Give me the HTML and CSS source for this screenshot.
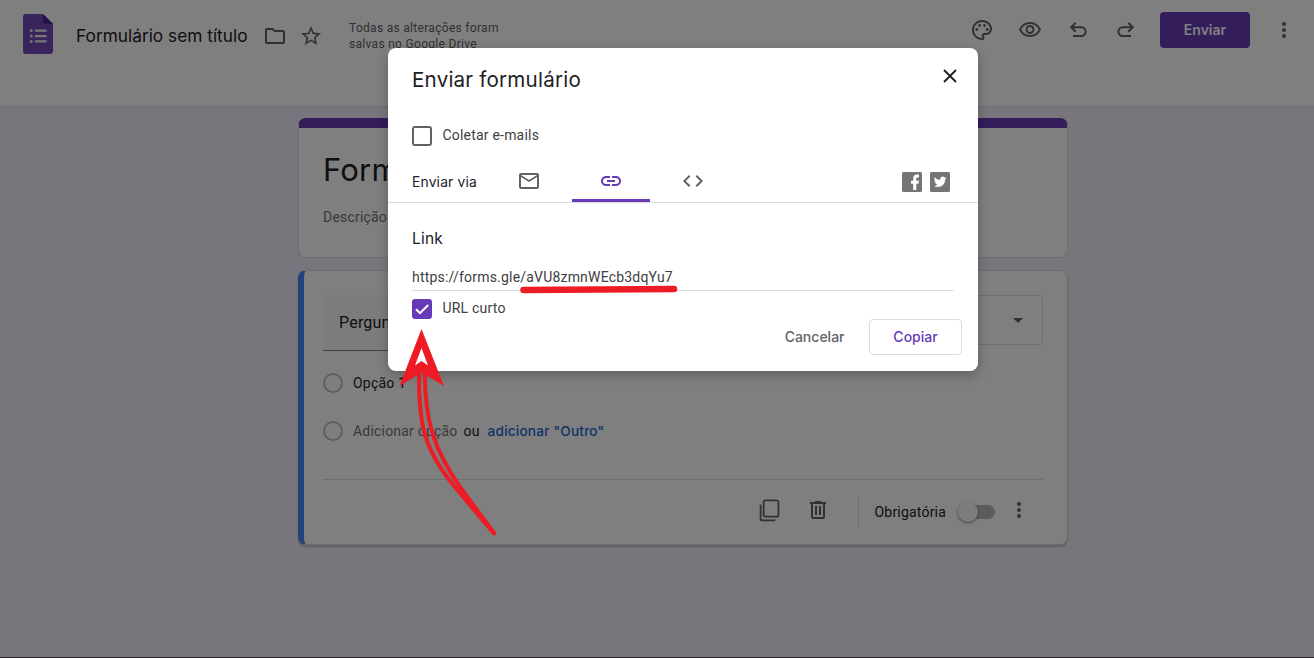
FILE: index.html
```html
<!DOCTYPE html>
<html lang="pt-BR">
<head>
<meta charset="utf-8">
<title>Formulário sem título</title>
<link rel="stylesheet" href="styles.css">
</head>
<body>
<div class="app">
  <header class="topbar">
    <div class="topbar-left">
      <svg class="logo" viewBox="0 0 30 40"><path fill="#7248b9" d="M3 0h17l10 10v27a3 3 0 0 1-3 3H3a3 3 0 0 1-3-3V3a3 3 0 0 1 3-3z"/><path fill="#4a2490" d="M20 0l10 10h-7.500a2.500 2.500 0 0 1-2.500-2.500z"/><path fill="#f1f1f1" d="M12 15.500h11.500v2.300H12zM12 20.900h11.500v2.300H12zM12 26.300h11.500v2.300H12z"/><g fill="#f1f1f1"><circle cx="8.300" cy="16.600" r="1.500"/><circle cx="8.300" cy="22" r="1.500"/><circle cx="8.300" cy="27.400" r="1.500"/></g></svg>
      <span class="doc-title">Formulário sem título</span>
      <svg class="icon folder" viewBox="0 0 24 24"><path d="M9.170 6l2 2H20v10H4V6h5.170M10 4H4c-1.100 0-1.990.9-1.990 2L2 18c0 1.100.9 2 2 2h16c1.100 0 2-.9 2-2V8c0-1.100-.9-2-2-2h-8l-2-2z"/></svg>
      <svg class="icon star" viewBox="0 0 24 24"><path d="M22 9.240l-7.190-.62L12 2 9.190 8.630 2 9.240l5.460 4.730L5.820 21 12 17.270 18.180 21l-1.630-7.030L22 9.240zM12 15.400l-3.760 2.270 1-4.280-3.320-2.880 4.380-.38L12 6.100l1.710 4.040 4.380.38-3.320 2.880 1 4.280L12 15.400z"/></svg>
      <p class="save-status">Todas as alterações foram<br>salvas no Google Drive</p>
    </div>
    <div class="topbar-right">
      <svg class="icon" viewBox="0 0 24 24"><path d="M12 22C6.490 22 2 17.510 2 12S6.490 2 12 2s10 4.040 10 9c0 3.310-2.690 6-6 6h-1.770c-.28 0-.5.22-.5.5 0 .12.05.23.13.33.41.47.64 1.060.64 1.670A2.500 2.500 0 0 1 12 22zm0-18c-4.410 0-8 3.590-8 8s3.590 8 8 8c.28 0 .5-.22.5-.5a.54.54 0 0 0-.14-.35c-.41-.46-.63-1.050-.63-1.650a2.500 2.500 0 0 1 2.500-2.500H16c2.210 0 4-1.790 4-4 0-3.860-3.590-7-8-7z"/><circle cx="6.800" cy="11.500" r="1.400"/><circle cx="9.600" cy="7.500" r="1.400"/><circle cx="14.400" cy="7.500" r="1.400"/><circle cx="17.200" cy="11.500" r="1.400"/></svg>
      <svg class="icon" viewBox="0 0 24 24"><path d="M12 6c3.790 0 7.170 2.130 8.820 5.500C19.170 14.870 15.790 17 12 17s-7.170-2.130-8.820-5.500C4.830 8.130 8.210 6 12 6m0-2C7 4 2.730 7.110 1 11.500 2.730 15.890 7 19 12 19s9.270-3.110 11-7.500C21.270 7.110 17 4 12 4zm0 5c1.380 0 2.500 1.120 2.500 2.500S13.380 14 12 14s-2.500-1.120-2.500-2.500S10.620 9 12 9m0-2c-2.480 0-4.500 2.020-4.500 4.500S9.520 16 12 16s4.500-2.020 4.500-4.500S14.480 7 12 7z"/></svg>
      <svg class="icon line" viewBox="0 0 24 24"><path d="M7 18h8.200a4.400 4.400 0 0 0 0-8.800H5.500M9.700 4.700L5.200 9.200l4.500 4.500"/></svg>
      <svg class="icon line" viewBox="0 0 24 24"><path d="M17 18H8.800a4.400 4.400 0 0 1 0-8.800h9.700M14.300 4.700l4.500 4.500-4.500 4.500"/></svg>
      <button class="send">Enviar</button>
      <svg class="icon" viewBox="0 0 24 24"><circle cx="12" cy="6" r="2"/><circle cx="12" cy="12" r="2"/><circle cx="12" cy="18" r="2"/></svg>
    </div>
  </header>

  <main class="form">
    <section class="card intro">
      <h1 class="form-title">Formulário sem título</h1>
      <p class="form-desc">Descrição do formulário</p>
    </section>
    <section class="card question">
      <div class="q-head">
        <div class="q-input">Pergunta</div>
        <div class="q-type"><svg class="caret" viewBox="0 0 10 5"><path d="M0 0h10L5 5z"/></svg></div>
      </div>
      <div class="option first"><span class="radio"></span><span>Opção 1</span></div>
      <div class="option"><span class="radio"></span><span class="muted">Adicionar opção</span><span class="or">ou</span><span class="other">adicionar "Outro"</span></div>
      <footer class="q-foot">
        <svg class="icon copy" viewBox="0 0 24 24"><path class="outline" d="M7.300 2.300h11.400a1.700 1.700 0 0 1 1.700 1.700v13a1.700 1.700 0 0 1-1.700 1.700H7.300A1.700 1.700 0 0 1 5.600 17V4a1.700 1.700 0 0 1 1.700-1.700zM2.600 6.500v14.200a1.700 1.700 0 0 0 1.700 1.700h13"/></svg>
        <svg class="icon trash" viewBox="0 0 24 24"><path d="M15 4V3H9v1H4v2h1v13c0 1.100.9 2 2 2h10c1.100 0 2-.9 2-2V6h1V4h-5zm2 15H7V6h10v13zM9 8h2v9H9zm4 0h2v9h-2z"/></svg>
        <span class="divider"></span>
        <span class="required">Obrigatória</span>
        <span class="toggle"><span class="knob"></span></span>
        <svg class="icon more" viewBox="0 0 24 24"><circle cx="12" cy="6" r="2"/><circle cx="12" cy="12" r="2"/><circle cx="12" cy="18" r="2"/></svg>
      </footer>
    </section>
  </main>
  <div class="bottom-edge"></div>
</div>

<div class="scrim">
  <div class="dialog" role="dialog">
    <div class="dialog-head">
      <h2>Enviar formulário</h2>
      <svg class="close" viewBox="0 0 14 14"><path d="M1 1l12 12M13 1L1 13"/></svg>
    </div>
    <label class="check collect"><span class="box"></span><span class="check-text">Coletar e-mails</span></label>
    <div class="tabs">
      <span class="tabs-label">Enviar via</span>
      <div class="tab"><svg class="icon" viewBox="0 0 24 24"><path d="M22 6c0-1.100-.9-2-2-2H4c-1.100 0-2 .9-2 2v12c0 1.100.9 2 2 2h16c1.100 0 2-.9 2-2V6zm-2 0l-8 5-8-5h16zm0 12H4V8l8 5 8-5v10z"/></svg></div>
      <div class="tab active"><svg class="icon" viewBox="0 0 24 24"><path d="M3.900 12c0-1.710 1.390-3.100 3.100-3.100h4V7H7c-2.760 0-5 2.240-5 5s2.240 5 5 5h4v-1.900H7c-1.710 0-3.100-1.390-3.100-3.100zM8 13h8v-2H8v2zm9-6h-4v1.900h4c1.710 0 3.100 1.390 3.100 3.100s-1.390 3.100-3.100 3.100h-4V17h4c2.760 0 5-2.240 5-5s-2.240-5-5-5z"/></svg></div>
      <div class="tab"><svg class="icon" viewBox="0 0 24 24"><path d="M9.400 16.600L4.800 12l4.600-4.600L8 6l-6 6 6 6 1.400-1.400zm5.200 0l4.600-4.600-4.600-4.600L16 6l6 6-6 6-1.400-1.400z"/></svg></div>
      <div class="social">
        <svg viewBox="0 0 20 20"><rect width="20" height="20" rx="1.500" fill="#757575"/><path fill="#fff" d="M11.200 18v-6.300H9V8.800h2.200V6.500c0-2.600 1.300-3.900 3.700-3.900h2v2.900h-1.400c-1 0-1.200.5-1.200 1.300v2h2.600l-.4 2.900h-2.200V18z"/></svg>
        <svg viewBox="0 0 20 20"><rect width="20" height="20" rx="1.500" fill="#757575"/><path fill="#fff" transform="translate(3.400 3.200) scale(.57)" d="M23 4.900a9 9 0 0 1-2.600.7 4.600 4.600 0 0 0 2-2.500 9 9 0 0 1-2.900 1.100 4.500 4.500 0 0 0-7.800 4.100A13 13 0 0 1 2.300 3.600a4.500 4.500 0 0 0 1.400 6.100 4.500 4.500 0 0 1-2.100-.6 4.500 4.500 0 0 0 3.700 4.500 4.600 4.600 0 0 1-2.100.1 4.500 4.500 0 0 0 4.300 3.200A9.200 9.200 0 0 1 .8 18.800a13 13 0 0 0 7 2c8.500 0 13.300-7.100 12.900-13.500A9.300 9.300 0 0 0 23 4.900z"/></svg>
      </div>
    </div>
    <div class="dialog-body">
      <h3>Link</h3>
      <div class="url">https://forms.gle/aVU8zmnWEcb3dqYu7</div>
      <label class="check short"><span class="box checked"><svg viewBox="0 0 20 20"><path d="M4 10.200l4 4L16.200 6"/></svg></span><span class="check-text">URL curto</span></label>
      <div class="actions"><button class="cancel">Cancelar</button><button class="copy-link">Copiar</button></div>
    </div>
  </div>
</div>

<svg class="annotation" viewBox="0 0 1314 658">
  <path class="ink underline" d="M523.500 290L674 289"/>
  <path class="head" fill-rule="evenodd" d="M421.500 329L444 386 421.500 372.500 399.500 386zM421.500 348L415 365.500l6.500-4.500 6.500 4.500z"/>
  <path class="ink" d="M419 371C418.500 425 424 449 454 486L494 533.500"/>
  <path class="ink" d="M424.800 371C424.500 422 435 451 460 487L494 533"/>
</svg>
</body>
</html>
```

FILE: styles.css
```css
* { box-sizing: border-box; }

body {
  margin: 0;
  width: 1314px;
  height: 658px;
  overflow: hidden;
  font-family: Roboto, "Liberation Sans", sans-serif;
  font-size: 14px;
  letter-spacing: 0.2px;
  color: #202124;
}

h1, h2, h3, p { margin: 0; font-weight: 400; }

button {
  padding: 0;
  border: 0;
  background: none;
  font: 500 14px/36px Inter, Roboto, sans-serif;
}

.icon { display: block; flex: none; width: 24px; height: 24px; fill: #5f6368; }
.icon.line { fill: none; stroke: #5f6368; stroke-width: 2; }

.app {
  display: flex;
  flex-direction: column;
  height: 658px;
  background: #f0ebf8;
}

.topbar {
  display: flex;
  justify-content: space-between;
  height: 107px;
  flex: none;
  background: #fff;
  border-bottom: 1px solid #dadce0;
}

.topbar-left { display: flex; align-items: flex-start; padding: 14px 0 0 23px; }
.logo { width: 30px; height: 40px; }
.doc-title {
  width: 187px;
  margin-left: 23px;
  font: 400 17.300px/44px Inter, Roboto, sans-serif;
  letter-spacing: 0;
  white-space: nowrap;
}
.folder { margin-top: 10px; }
.star { margin: 10px 0 0 12px; }
.save-status {
  margin: 6px 0 0 26px;
  font-size: 12px;
  line-height: 16px;
  letter-spacing: 0.3px;
  color: #5f6368;
}

.topbar-right { display: flex; align-items: center; gap: 24px; height: 36px; margin: 12px 18px 0 0; }
.send {
  width: 90px;
  height: 36px;
  margin: 0 -2px;
  border-radius: 4px;
  background: #673ab7;
  color: #fff;
  font-weight: 600;
}

.form { display: flex; flex-direction: column; gap: 12px; width: 770px; margin: 11px 0 0 298px; }
.card { background: #fff; border: 1px solid #dadce0; border-radius: 8px; }

.intro {
  height: 140px;
  padding: 24px 24px 0;
  border-top: 10px solid #673ab7;
}
.form-title { font: 400 31px/36px Inter, Roboto, sans-serif; white-space: nowrap; }
.form-desc { margin-top: 19px; line-height: 20px; color: #70757a; }

.question {
  height: 275px;
  padding: 24px 24px 0 19px;
  border-left: 6px solid #4285f4;
  box-shadow: 0 2px 2px rgba(0, 0, 0, 0.2);
}
.q-head { display: flex; justify-content: space-between; }
.q-input {
  width: 446px;
  height: 56px;
  padding-left: 16px;
  background: #f8f9fa;
  border-bottom: 1px solid #80868b;
  font-size: 16px;
  line-height: 55px;
}
.q-type {
  display: flex;
  align-items: center;
  justify-content: flex-end;
  width: 244px;
  height: 50px;
  padding-right: 19px;
  border: 1px solid #dadce0;
  border-radius: 4px;
}
.caret { width: 10px; height: 5px; fill: #5f6368; }

.option { display: flex; align-items: center; height: 48px; }
.option.first { margin-top: 8px; }
.radio { width: 20px; height: 20px; margin-right: 10px; border: 2px solid #bdbdbd; border-radius: 50%; }
.muted { color: #70757a; }
.or { margin-left: 6px; }
.other { margin-left: 8px; font: 500 13.600px/20px Inter, Roboto, sans-serif; color: #1967d2; }

.q-foot {
  display: flex;
  align-items: center;
  justify-content: flex-end;
  height: 65px;
  margin-top: 24px;
  border-top: 1px solid #dadce0;
}
.copy { margin: -4px 24px 0 0; }
.copy .outline { fill: none; stroke: #5f6368; stroke-width: 1.800; }
.trash { margin: -4px 28px 0 0; }
.divider { width: 1px; height: 32px; margin-right: 15px; background: #dadce0; }
.toggle { display: flex; align-items: center; width: 36px; height: 14px; margin-left: 13px; border-radius: 7px; background: #b9b9b9; }
.knob { width: 20px; height: 20px; margin-left: -1px; border-radius: 50%; background: #fafafa; box-shadow: 0 1px 3px rgba(0, 0, 0, 0.5); }
.more { margin: -4px 12px 0 12px; }

.bottom-edge { height: 1px; margin-top: auto; background: #50464e; }

.scrim {
  position: absolute;
  inset: 0;
  width: 1314px;
  height: 658px;
  padding: 48px 0 0 388px;
  background: rgba(0, 0, 0, 0.5);
}

.dialog {
  width: 590px;
  height: 323px;
  border-radius: 8px;
  background: #fff;
  box-shadow: 0 4px 12px rgba(0, 0, 0, 0.25);
}
.dialog-head { display: flex; justify-content: space-between; padding: 16px 21px 0 24px; }
.dialog-head h2 { font: 400 20.600px/32px Inter, Roboto, sans-serif; }
.close { width: 14px; height: 14px; margin-top: 5px; fill: none; stroke: #202124; stroke-width: 1.900; }

.check { display: flex; align-items: center; height: 20px; color: #3c4043; }
.check-text { padding-bottom: 2px; }
.box { width: 20px; height: 20px; margin-right: 10.500px; border: 2px solid #5f6368; border-radius: 3px; }
.box.checked { border: 0; background: #673ab7; }
.box svg { display: block; fill: none; stroke: #fff; stroke-width: 2; }
.collect { margin: 30px 0 0 24px; }

.tabs {
  display: flex;
  height: 49px;
  margin-top: 8px;
  padding-left: 24px;
  border-bottom: 1px solid #dadce0;
}
.tabs-label { width: 76px; font: 400 13.800px/57px Inter, Roboto, sans-serif; }
.tab { display: flex; justify-content: center; width: 78px; margin-right: 4px; padding-top: 15px; }
.tabs-label + .tab { margin-left: 2px; }
.active { border-bottom: 3px solid #673ab7; border-radius: 2px 2px 0 0; }
.active .icon { fill: #673ab7; }
.social { display: flex; gap: 8px; margin: 18px 28px 0 auto; }
.social svg { width: 20px; height: 20px; }

.dialog-body { padding: 0 24px; }
.dialog-body h3 { padding-top: 24px; font: 400 15.500px/24px Inter, Roboto, sans-serif; }
.url { height: 26px; margin-top: 14px; line-height: 24px; border-bottom: 1px solid #dadce0; color: #3c4043; }
.short { margin-top: 8px; }
.actions { display: flex; justify-content: flex-end; gap: 24.500px; margin-right: -8px; }
.cancel { color: #5f6368; }
.copy-link { width: 93px; height: 36px; border: 1px solid #dadce0; border-radius: 4px; line-height: 34px; color: #673ab7; }

.annotation { position: absolute; inset: 0; width: 1314px; height: 658px; pointer-events: none; }
.ink { fill: none; stroke: #ed1c24; stroke-width: 4; stroke-linecap: round; }
.underline { stroke-width: 6.500; }
.head { fill: #ed1c24; }
```
